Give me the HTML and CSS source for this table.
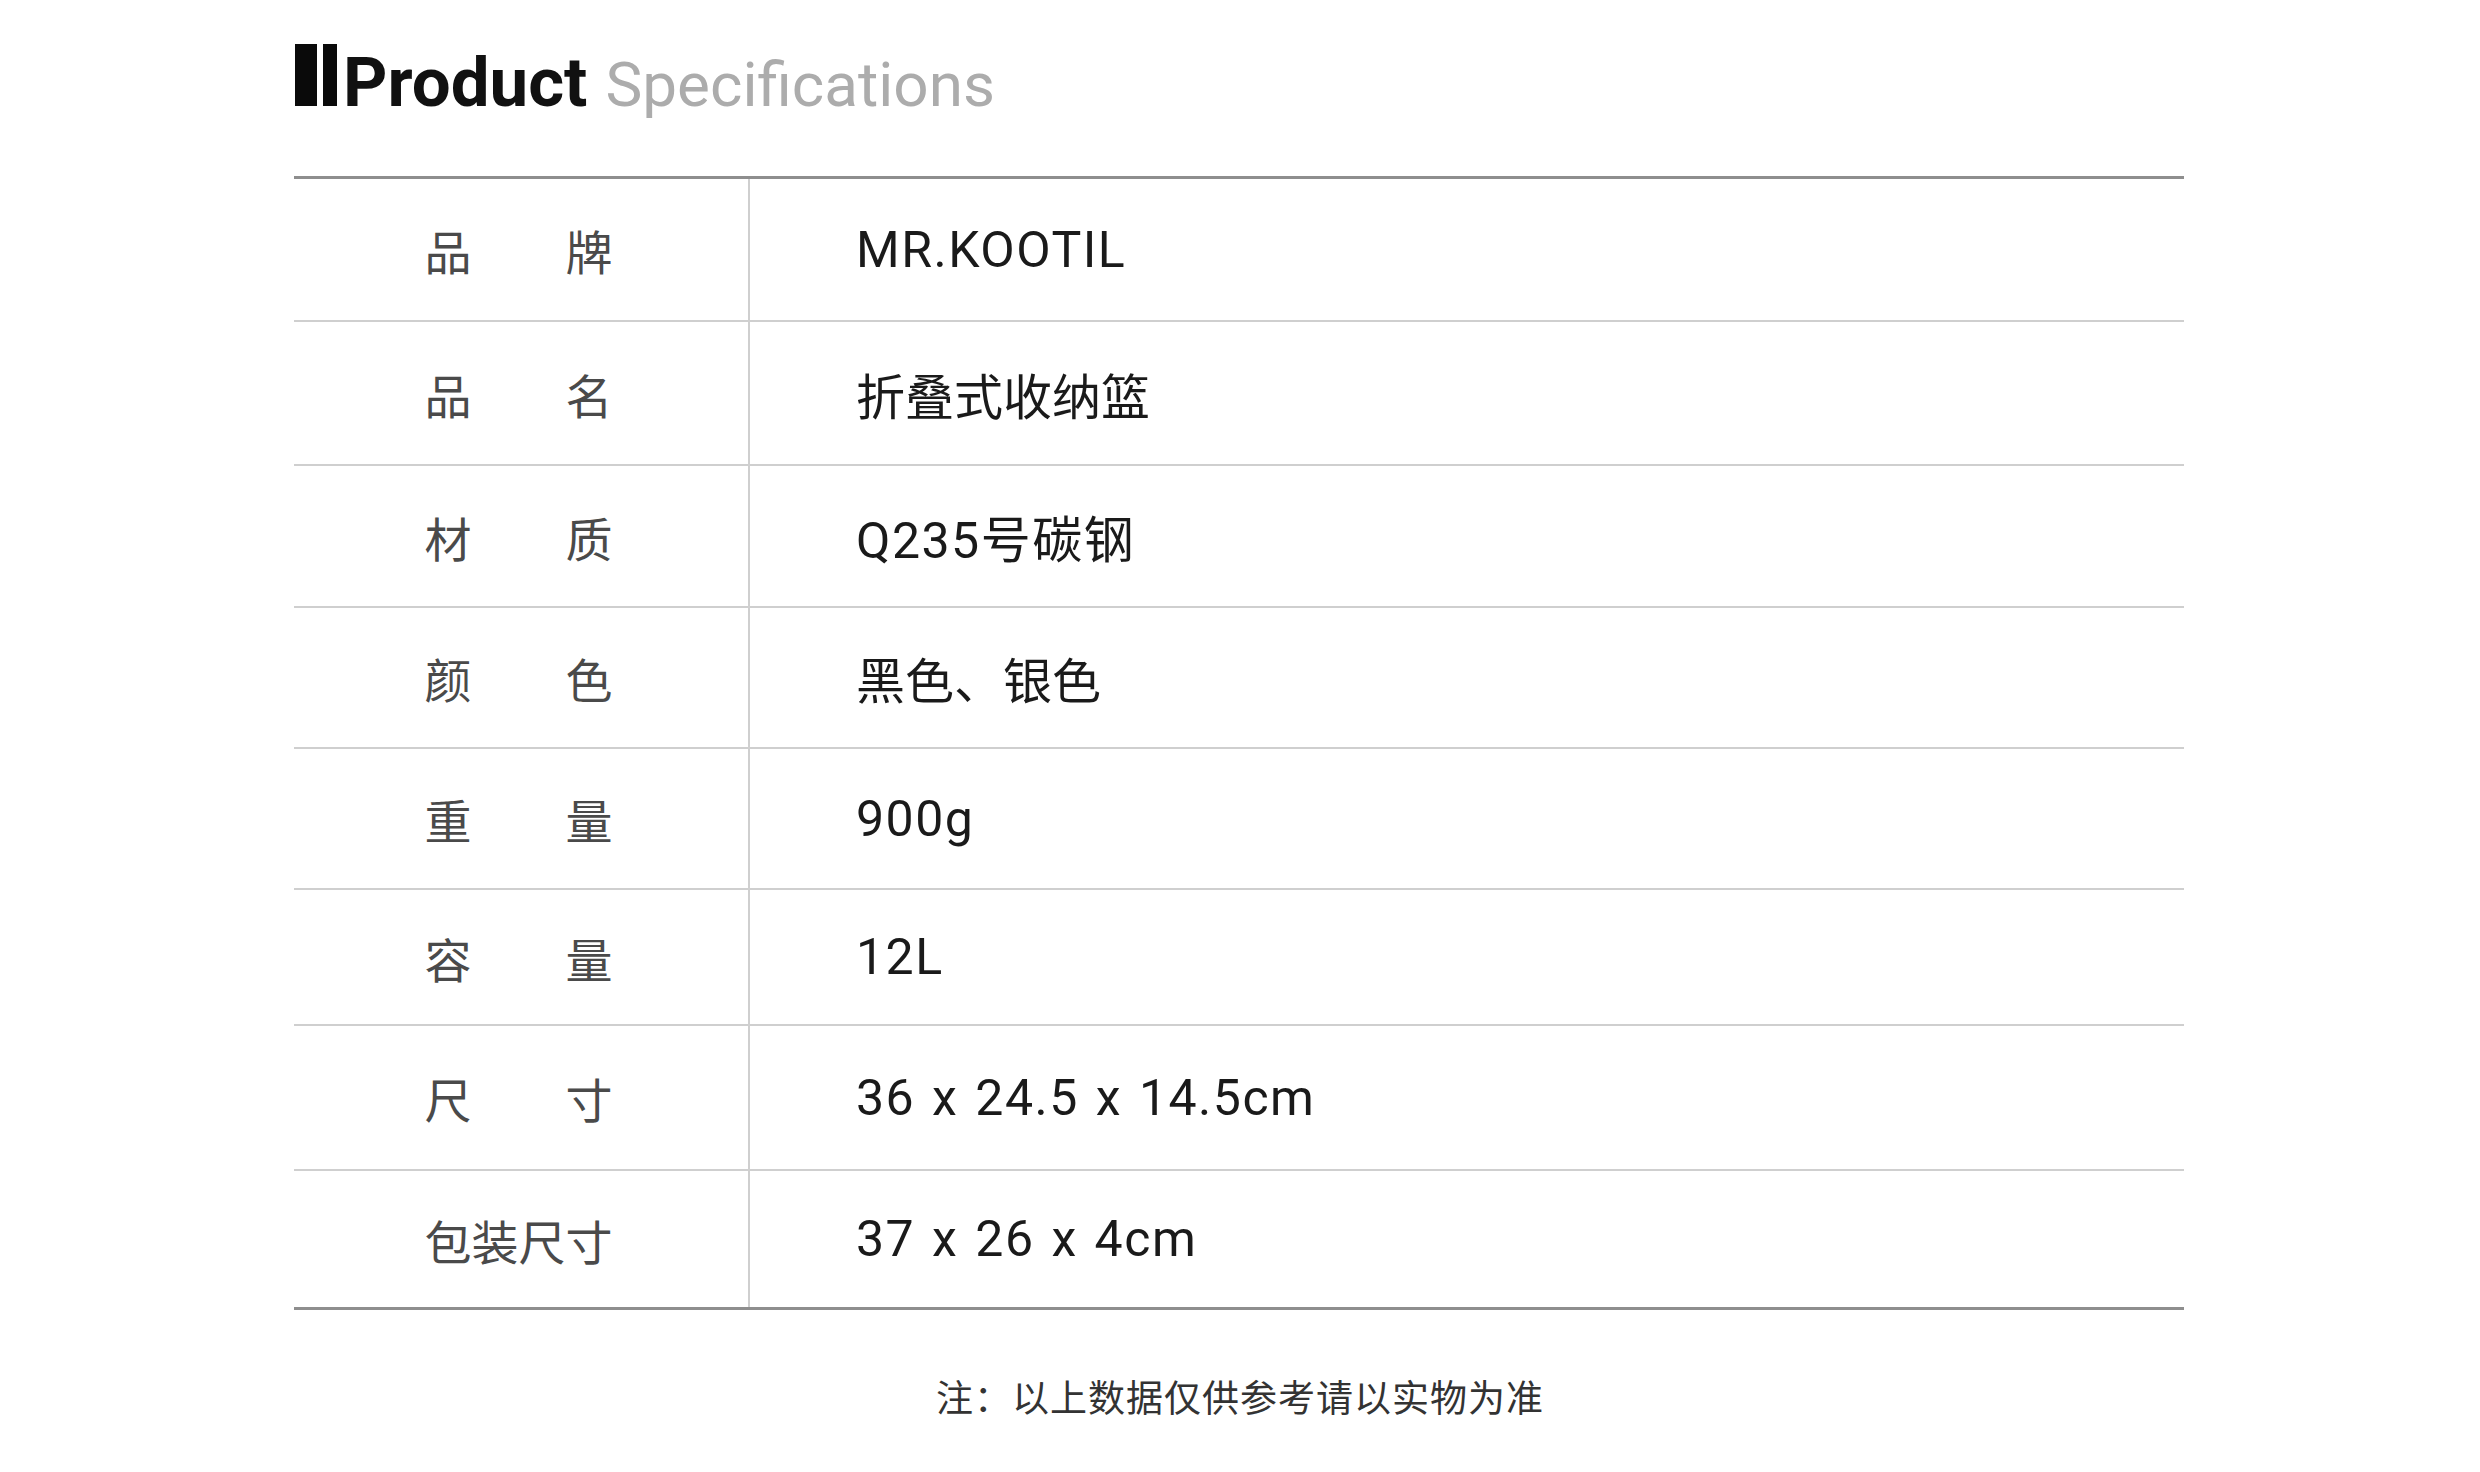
FILE: index.html
```html
<!DOCTYPE html>
<html lang="zh-CN">
<head>
<meta charset="utf-8">
<title>Product Specifications</title>
<link rel="stylesheet" href="styles.css">
</head>
<body>
<main class="sheet">
  <header class="title">
    <span class="title-mark"><span class="bar bar-wide"></span><span class="bar bar-narrow"></span></span>
    <span class="title-main">Product</span>
    <span class="title-sub">Specifications</span>
  </header>
  <section class="spec-table">
    <div class="label">品　　牌</div><div class="value">MR.KOOTIL</div>
    <div class="label">品　　名</div><div class="value zh">折叠式收纳篮</div>
    <div class="label">材　　质</div><div class="value">Q235号碳钢</div>
    <div class="label">颜　　色</div><div class="value zh">黑色、银色</div>
    <div class="label">重　　量</div><div class="value">900g</div>
    <div class="label">容　　量</div><div class="value">12L</div>
    <div class="label">尺　　寸</div><div class="value">36 x 24.5 x 14.5cm</div>
    <div class="label last">包装尺寸</div><div class="value last">37 x 26 x 4cm</div>
  </section>
</main>
<p class="note">注：以上数据仅供参考请以实物为准</p>
</body>
</html>
```

FILE: styles.css
```css
html, body {
  margin: 0;
  padding: 0;
  background: #ffffff;
}

body {
  width: 2480px;
  min-height: 1472px;
  font-family: Roboto, "Noto Sans CJK SC", sans-serif;
}

.sheet {
  width: 1890px;
  margin-left: 294px;
}

.title {
  display: flex;
  align-items: baseline;
  height: 62px;
  padding-top: 44px;
  padding-left: 1px;
}

.title-mark {
  display: flex;
  gap: 6px;
  height: 62px;
  margin-right: 6px;
}

.bar {
  display: block;
  height: 62px;
  background: #0a0a0a;
}

.bar-wide { width: 22px; }
.bar-narrow { width: 14px; }

.title-main {
  font-family: Roboto, sans-serif;
  font-weight: 700;
  font-size: 69px;
  line-height: 1;
  color: #111111;
}

.title-sub {
  font-family: Roboto, sans-serif;
  font-weight: 400;
  font-size: 62px;
  line-height: 1;
  color: #acacac;
  margin-left: 18px;
}

.spec-table {
  display: grid;
  grid-template-columns: 454px 1fr;
  grid-template-rows: 143px 144px 142px 141px 141px 136px 145px 136px;
  margin-top: 70px;
  border-top: 3px solid #8e8e8e;
  border-bottom: 3px solid #8e8e8e;
}

.label,
.value {
  display: flex;
  align-items: center;
  box-sizing: border-box;
  border-bottom: 2px solid #cfcfcf;
}

.label {
  justify-content: center;
  padding-right: 5px;
  font-family: "Noto Sans CJK SC", sans-serif;
  font-size: 47px;
  color: #4a4a4a;
}

.value {
  border-left: 2px solid #cfcfcf;
  padding-left: 106px;
  font-family: Roboto, "Noto Sans CJK SC", sans-serif;
  font-size: 50px;
  letter-spacing: 1.5px;
  word-spacing: 3px;
  color: #1a1a1a;
}

.value.zh {
  font-size: 49px;
  letter-spacing: 0;
}

.label.last,
.value.last {
  border-bottom: none;
}

.note {
  margin: 64px 0 0;
  text-align: center;
  font-family: "Noto Sans CJK SC", sans-serif;
  font-size: 37px;
  line-height: 44px;
  letter-spacing: 1px;
  color: #333333;
}
```
